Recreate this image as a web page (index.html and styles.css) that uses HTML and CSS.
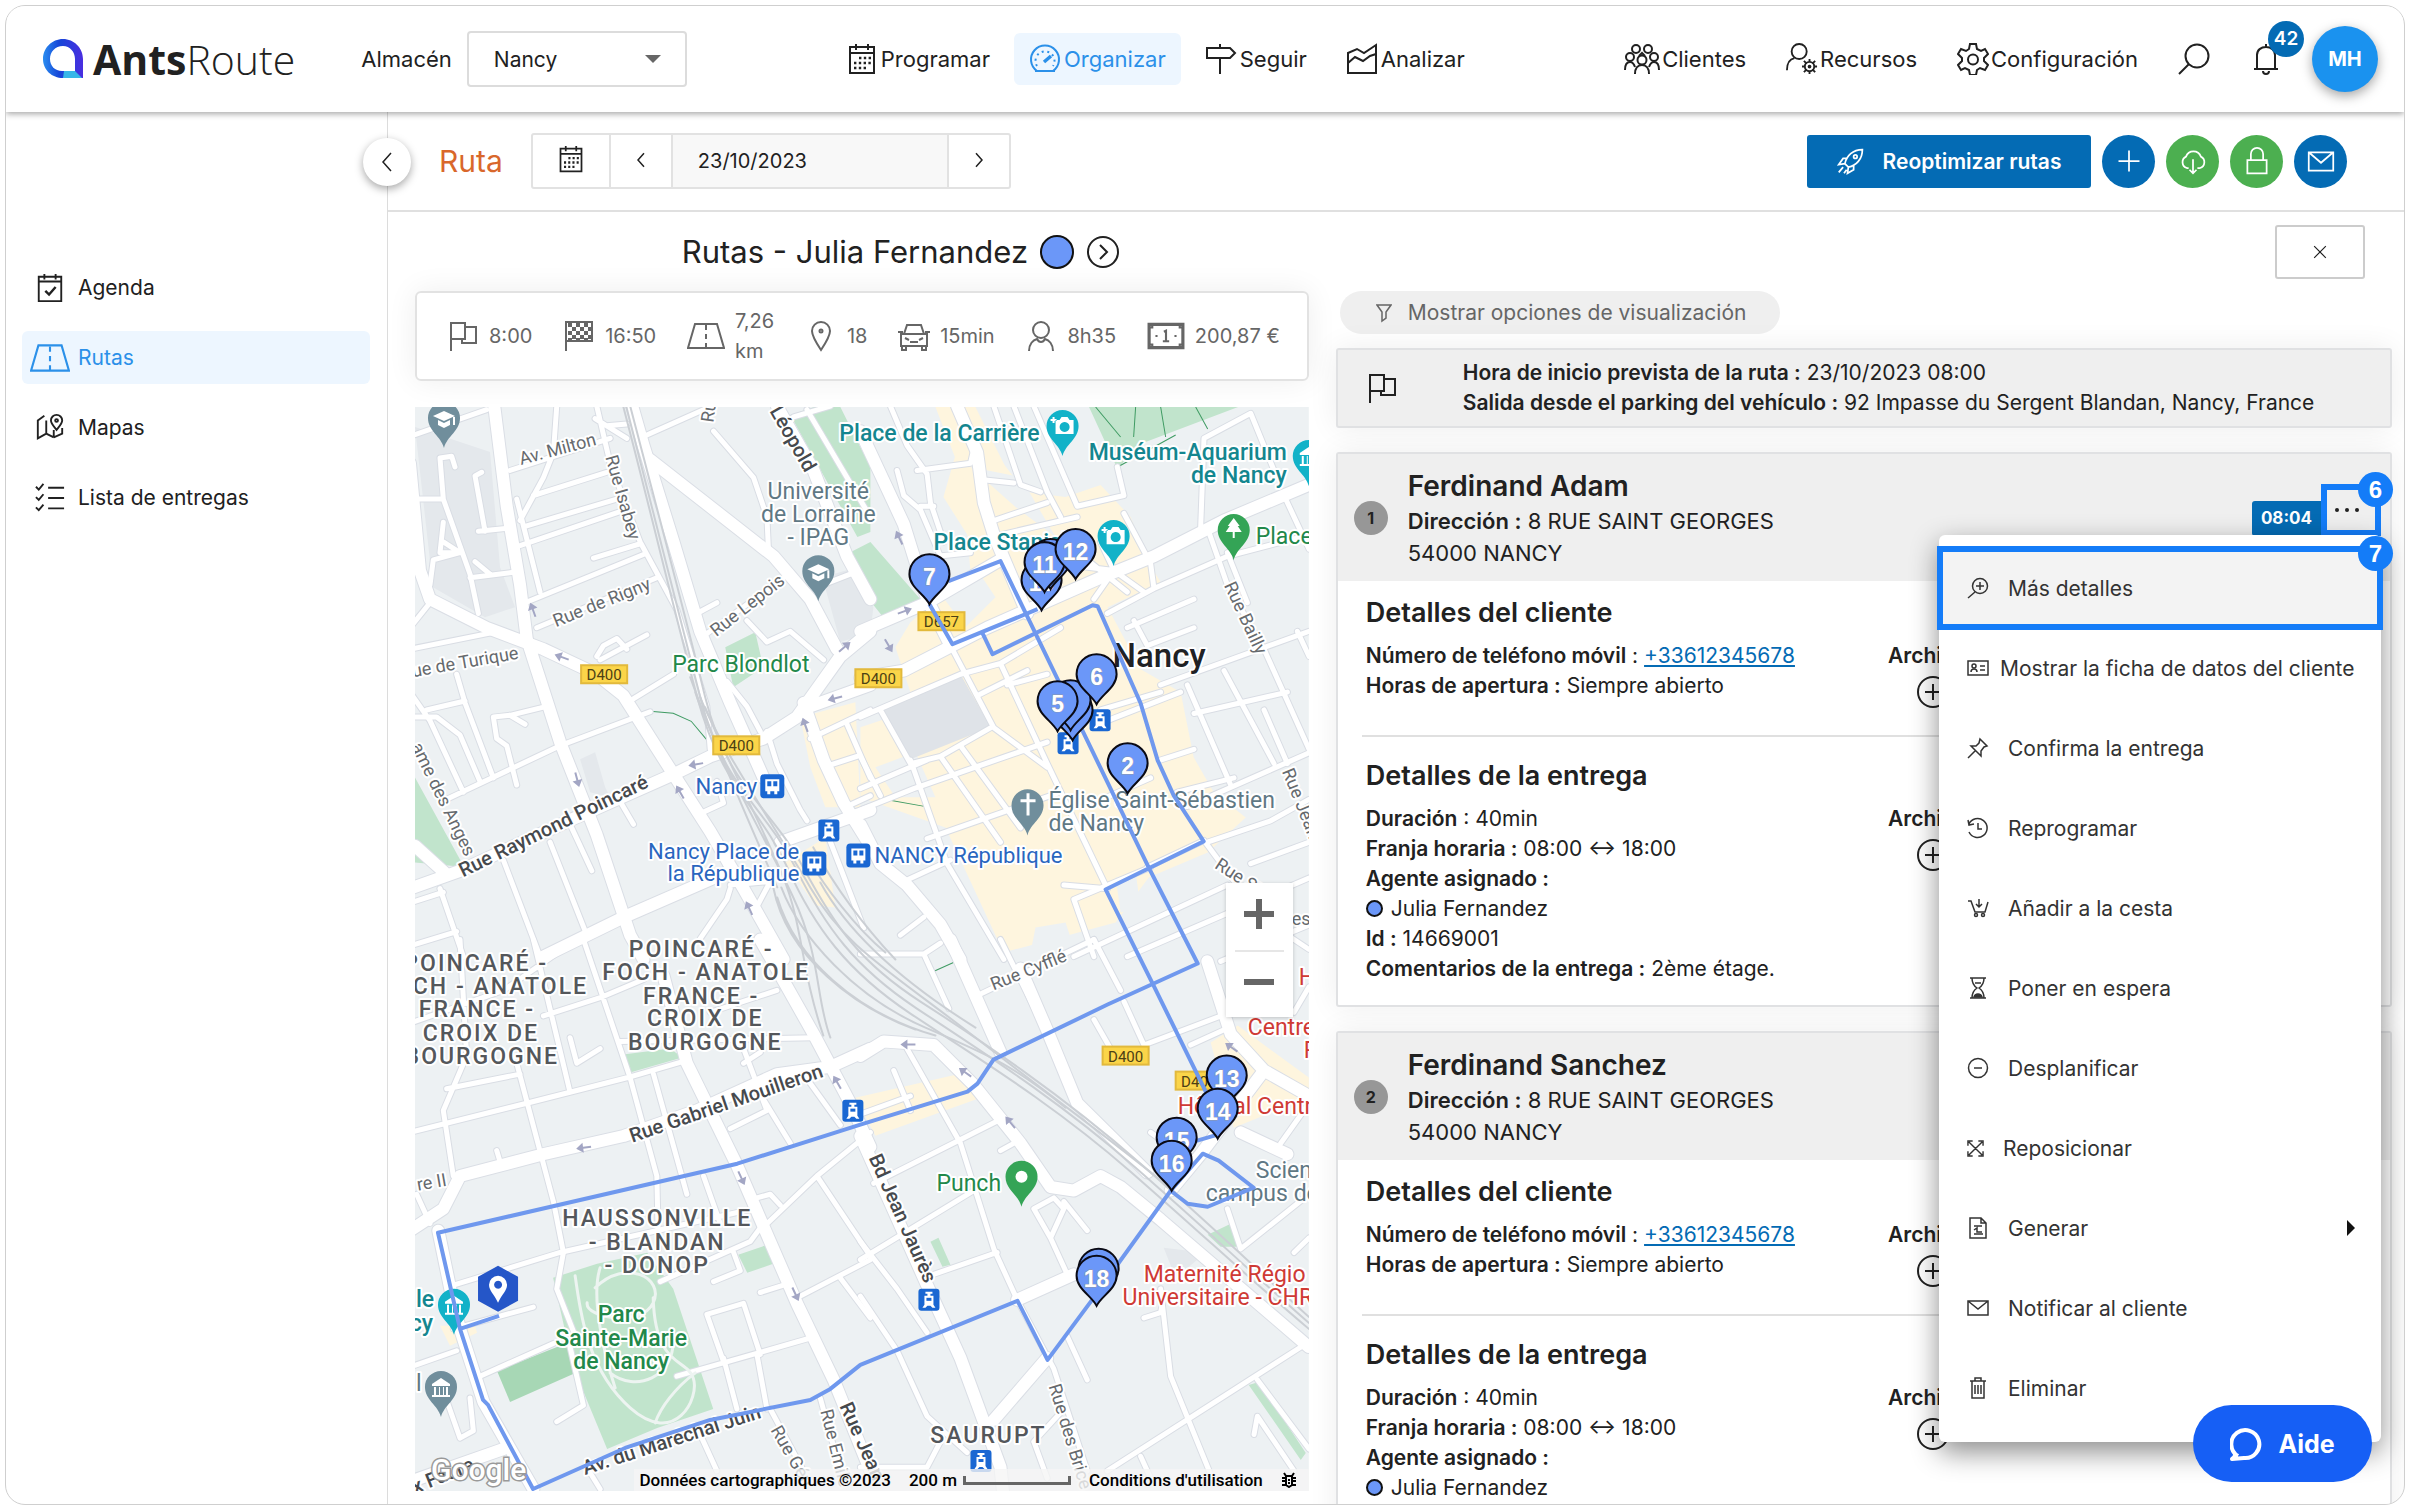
FILE: index.html
```html
<!doctype html>
<html lang="es">

<head>
    <meta charset="utf-8">
    <meta name="viewport" content="width=device-width, initial-scale=1">
    <title>AntsRoute - Rutas</title>
    <link rel="stylesheet" href="styles.css">
</head>

<body>
    <!-- icons -->
    <svg class="sprite" aria-hidden="true">
        <symbol id="i-calendar" viewBox="0 0 32 32">
            <path d="M4 4h24v26H4zM4 10h24M10 1v6M22 1v6" />
            <path stroke-dasharray="2.4 2.4" stroke-width="2.6" d="M13 15h12M8 20h17M8 25h12" />
        </symbol>
        <symbol id="i-agenda" viewBox="0 0 32 32">
            <path d="M4 4h24v26H4zM4 9h24M10 1v6M22 1v6" />
            <path stroke-width="2.6" d="M11 19l4 4 7-8" />
        </symbol>
        <symbol id="i-gauge" viewBox="0 0 32 32">
            <path d="M8 28a14 14 0 1 1 16 0zM6 28h20" />
            <path stroke-dasharray="2 3.6" d="M8 23a9.500 9.500 0 1 1 16 0" />
            <path stroke-width="3.5" d="M15 19l7-6" />
        </symbol>
        <symbol id="i-sign" viewBox="0 0 32 32">
            <path d="M2 5h23l5 5-5 5H2zM15 1v4M15 15v16" />
        </symbol>
        <symbol id="i-chart" viewBox="0 0 32 32">
            <path d="M2 30V10l9-4 7 4L30 2v28zM2 20l7-6 8 4 7-5 6-2" />
        </symbol>
        <symbol id="i-clients" viewBox="0 0 36 32">
            <circle cx="12" cy="6" r="4" />
            <circle cx="24" cy="6" r="4" />
            <circle cx="6" cy="14" r="4" />
            <circle cx="30" cy="14" r="4" />
            <circle cx="18" cy="17" r="4.500" />
            <path d="M1 27c0-5 2-8 5-8s4 2 5 5M35 27c0-5-2-8-5-8s-4 2-5 5M11 31c0-6 3-9 7-9s7 3 7 9M15 13l3-3 3 3" />
        </symbol>
        <symbol id="i-resources" viewBox="0 0 34 34">
            <circle cx="14" cy="9" r="8" />
            <path d="M1 29c0-7 3-12 8-13" />
            <circle cx="25" cy="25" r="5" />
            <circle cx="25" cy="25" r="1" />
            <path d="M25 17v3M25 30v3M17 25h3M30 25h3M19 19l3 3M28 28l3 3M31 19l-3 3M22 28l-3 3" />
        </symbol>
        <symbol id="i-gear" viewBox="0 0 32 32">
            <path d="M13 1h6l1 5 4 2 4-2 3 5-4 4v3l4 4-3 5-5-2-3 2-1 5h-6l-1-5-4-2-4 2-3-5 4-4v-3l-4-4 3-5 5 2 3-2z" />
            <circle cx="16" cy="16.500" r="5" />
        </symbol>
        <symbol id="i-search" viewBox="0 0 32 32">
            <circle cx="19" cy="13" r="11.500" />
            <path d="M11 21L1 31" />
        </symbol>
        <symbol id="i-bell" viewBox="0 0 26 32">
            <path d="M1 26h24M4 26V12c0-5 4-8 9-8s9 3 9 8v14M13 1v3M10 28a3 3 0 0 0 6 0" />
        </symbol>
        <symbol id="i-road" viewBox="0 0 38 28">
            <path d="M8 2h22l7 24H1z" />
            <path stroke-dasharray="5 4" d="M19 3v23" />
        </symbol>
        <symbol id="i-map" viewBox="0 0 32 32">
            <path d="M20 26l-8-4-9 5V8l7-5M12 8v14M20 26l9-4V16M20 18v8" />
            <path d="M23 18c-4-5-6-7-6-10a6 6 0 0 1 12 0c0 3-2 5-6 10z" />
            <circle cx="23" cy="8" r="1.500" />
        </symbol>
        <symbol id="i-list" viewBox="0 0 32 32">
            <path d="M14 5h17M14 16h17M14 27h17" />
            <path d="M1 4l3 3 5-6M1 15l3 3 5-6M1 26l3 3 5-6" />
        </symbol>
        <symbol id="i-left" viewBox="0 0 16 24">
            <path d="M12 3L4 12l8 9" />
        </symbol>
        <symbol id="i-right" viewBox="0 0 16 24">
            <path d="M4 3l8 9-8 9" />
        </symbol>
        <symbol id="i-rocket" viewBox="0 0 32 32">
            <path d="M9 19C11 10 18 3 29 3c0 11-7 18-16 20zM11 13H7l-5 7 7-1M19 21v5l-7 4 1-7M7 23l-5 6M11 26l-3 4" />
            <circle cx="21" cy="11" r="2" />
        </symbol>
        <symbol id="i-plus" viewBox="0 0 32 32">
            <path d="M16 4v24M4 16h24" />
        </symbol>
        <symbol id="i-cloud" viewBox="0 0 32 32">
            <path d="M11 24H9a7 7 0 0 1-1-13 9 9 0 0 1 17 0 7 7 0 0 1-1 13h-3M16 14v16M12 26l4 4 4-4" />
        </symbol>
        <symbol id="i-lock" viewBox="0 0 32 32">
            <path d="M5 15h22v15H5zM9 15V8a7 7 0 0 1 14 0v7" />
        </symbol>
        <symbol id="i-mail" viewBox="0 0 32 32">
            <path d="M2 6h28v21H2zM2 6l14 12L30 6" />
        </symbol>
        <symbol id="i-mail-sm" viewBox="0 0 22 22">
            <path d="M1 4h20v14H1zM1 4l10 8 10-8" />
        </symbol>
        <symbol id="i-flag" viewBox="0 0 32 32">
            <path d="M4 31V3h14v16H4M18 7h11v16H15v-4" />
        </symbol>
        <symbol id="i-finish" viewBox="0 0 32 32">
            <path d="M3 31V2h26v19H3" />
            <path stroke-width="4" stroke-dasharray="4 4" d="M5 5h24M5 13h24M5 20h24" />
            <path stroke-width="4" stroke-dasharray="4 4" d="M9 9h20M9 17h20" />
        </symbol>
        <symbol id="i-pin" viewBox="0 0 24 32">
            <path d="M12 30C6 21 3 16 3 11a9 9 0 0 1 18 0c0 5-3 10-9 19z" />
            <circle cx="12" cy="11" r="1.500" />
        </symbol>
        <symbol id="i-car" viewBox="0 0 32 32">
            <path d="M3 14h26v12H3zM6 14l3-9h14l3 9M0 12h5M27 12h5M4 26v4h4v-4M24 26v4h4v-4M12 22h8M7 18l4 2M25 18l-4 2" />
        </symbol>
        <symbol id="i-person" viewBox="0 0 28 32">
            <circle cx="14" cy="10" r="8" />
            <path d="M2 31c0-7 4-11 8-12 2 4 6 4 8 0 4 1 8 5 8 12" />
        </symbol>
        <symbol id="i-money" viewBox="0 0 36 26">
            <path stroke-width="3" d="M2 2h32v22H2z" />
            <path d="M16 9l2-1v10M15 18h6M9 12v2M27 12v2M5 2v3H2M31 2v3h3M5 24v-3H2M31 24v-3h3" />
        </symbol>
        <symbol id="i-filter" viewBox="0 0 16 20">
            <path d="M1 2h14l-5 7v6l-4 3V9z" />
        </symbol>
        <symbol id="i-next" viewBox="0 0 34 34">
            <circle cx="17" cy="17" r="15" />
            <path d="M14 10l7 7-7 7" />
        </symbol>
        <symbol id="i-add" viewBox="0 0 34 34">
            <circle cx="17" cy="17" r="15" />
            <path d="M17 9v16M9 17h16" />
        </symbol>
        <symbol id="i-zoom" viewBox="0 0 22 22">
            <circle cx="13" cy="9" r="7.500" />
            <path d="M8 15l-7 6M13 5v8M9 9h8" />
        </symbol>
        <symbol id="i-card" viewBox="0 0 22 22">
            <path d="M1 4h20v14H1zM13 9h5M13 13h5M4 15c0-4 6-4 6 0" />
            <circle cx="7" cy="9" r="2" />
        </symbol>
        <symbol id="i-tack" viewBox="0 0 22 22">
            <path d="M1 21l7-7M13 2l7 7-3 1-3 4v5L4 9h5l3-3z" />
        </symbol>
        <symbol id="i-history" viewBox="0 0 22 22">
            <path d="M2 7a9.500 9.500 0 1 1 0 8M1 3l1 5 5-1M11 6v6h4" />
        </symbol>
        <symbol id="i-cart" viewBox="0 0 22 22">
            <path d="M1 4h3l4 11h10l3-10M12 2v8M9 7l3 3 3-3" />
            <circle cx="9" cy="18" r="1.500" />
            <circle cx="16" cy="18" r="1.500" />
        </symbol>
        <symbol id="i-hourglass" viewBox="0 0 22 22">
            <path d="M3 1h16M3 21h16M5 1c0 6 2 8 5 10-3 2-5 4-5 10M17 1c0 6-2 8-5 10 3 2 5 4 5 10M8 6h6" />
            <path fill="currentColor" d="M7 20c1-4 7-4 8 0z" />
        </symbol>
        <symbol id="i-minus" viewBox="0 0 22 22">
            <circle cx="11" cy="11" r="9.500" />
            <path d="M7 11h8" />
        </symbol>
        <symbol id="i-expand" viewBox="0 0 18 18">
            <path d="M2 2l14 14M16 2L2 16M1 6V1h5M12 1h5v5M17 12v5h-5M6 17H1v-5" />
        </symbol>
        <symbol id="i-doc" viewBox="0 0 22 22">
            <path d="M3 1h11l5 5v15H3zM14 1v5h5M7 9h8M7 13l3-2v4l5 0M7 17h9" />
        </symbol>
        <symbol id="i-trash" viewBox="0 0 22 22">
            <path d="M3 4h16M8 4V1h6v3M5 4v17h12V4M8 8v9M11 8v9M14 8v9" />
        </symbol>
    </svg>

    <div class="app">
        <header class="topbar">
            <a class="logo" href="#">
                <svg width="40" height="40" viewBox="0 0 40 40" aria-hidden="true">
                    <defs>
                        <linearGradient id="lg" x1="0" y1="0" x2="1" y2="0">
                            <stop offset="0" stop-color="#2a8df0" />
                            <stop offset=".4" stop-color="#1546d8" />
                            <stop offset="1" stop-color="#4a2ee0" />
                        </linearGradient>
                    </defs>
                    <path fill="url(#lg)" fill-rule="evenodd" d="M20 0c11 0 20 9 20 20v19H20C9 39 0 31 0 20S9 0 20 0zM20 7C12 7 7 13 7 20s5 12 12 12h13V20c0-7-5-13-12-13z" />
                    <path fill="#38b6e8" d="M21 32h11l7 7H20z" />
                </svg>
                <span><b>Ants</b>Route</span>
            </a>
            <label class="warehouse-label" for="warehouse">Almacén</label>
            <span class="select-wrap">
                <select id="warehouse">
                    <option>Nancy</option>
                </select>
            </span>
            <nav class="main-nav">
                <a href="#"><svg class="icon"><use href="#i-calendar" /></svg>Programar</a>
                <a href="#" class="active"><svg class="icon"><use href="#i-gauge" /></svg>Organizar</a>
                <a href="#"><svg class="icon"><use href="#i-sign" /></svg>Seguir</a>
                <a href="#"><svg class="icon"><use href="#i-chart" /></svg>Analizar</a>
            </nav>
            <nav class="user-nav">
                <a href="#"><svg class="icon wide"><use href="#i-clients" /></svg>Clientes</a>
                <a href="#"><svg class="icon"><use href="#i-resources" /></svg>Recursos</a>
                <a href="#"><svg class="icon"><use href="#i-gear" /></svg>Configuración</a>
                <button class="plain" aria-label="Buscar"><svg class="icon"><use href="#i-search" /></svg></button>
                <button class="plain bell" aria-label="Notificaciones"><svg class="icon"><use href="#i-bell" /></svg><span class="count">42</span></button>
                <button class="avatar">MH</button>
            </nav>
        </header>

        <div class="body">
            <aside class="sidebar">
                <button class="collapse" aria-label="Contraer"><svg class="chev"><use href="#i-left" /></svg></button>
                <nav class="side-nav">
                    <a href="#"><svg class="icon"><use href="#i-agenda" /></svg>Agenda</a>
                    <a href="#" class="active"><svg class="icon"><use href="#i-road" /></svg>Rutas</a>
                    <a href="#"><svg class="icon"><use href="#i-map" /></svg>Mapas</a>
                    <a href="#"><svg class="icon"><use href="#i-list" /></svg>Lista de entregas</a>
                </nav>
            </aside>

            <main class="main">
                <div class="toolbar">
                    <h1>Ruta</h1>
                    <div class="date-group">
                        <button class="cal" aria-label="Calendario"><svg class="icon-sm"><use href="#i-calendar" /></svg></button>
                        <button aria-label="Anterior"><svg class="chev-sm"><use href="#i-left" /></svg></button>
                        <input type="text" value="23/10/2023" aria-label="Fecha">
                        <button aria-label="Siguiente"><svg class="chev-sm"><use href="#i-right" /></svg></button>
                    </div>
                    <div class="actions">
                        <button class="optimize"><svg class="icon-sm"><use href="#i-rocket" /></svg>Reoptimizar rutas</button>
                        <button class="round" aria-label="Añadir"><svg class="icon-sm"><use href="#i-plus" /></svg></button>
                        <button class="round green" aria-label="Exportar"><svg class="icon-sm"><use href="#i-cloud" /></svg></button>
                        <button class="round green" aria-label="Bloquear"><svg class="icon-sm"><use href="#i-lock" /></svg></button>
                        <button class="round" aria-label="Enviar"><svg class="icon-sm"><use href="#i-mail" /></svg></button>
                    </div>
                </div>

                <div class="content">
                    <section class="route">
                        <div class="route-title">
                            <h2>Rutas - Julia Fernandez</h2>
                            <span class="dot big"></span>
                            <button class="plain" aria-label="Ruta siguiente"><svg class="icon-circle"><use href="#i-next" /></svg></button>
                        </div>

                        <ul class="stats">
                            <li><svg class="icon-st"><use href="#i-flag" /></svg>8:00</li>
                            <li><svg class="icon-st"><use href="#i-finish" /></svg>16:50</li>
                            <li><svg class="icon-st wide"><use href="#i-road" /></svg><span>7,26<br>km</span></li>
                            <li><svg class="icon-st"><use href="#i-pin" /></svg>18</li>
                            <li><svg class="icon-st"><use href="#i-car" /></svg>15min</li>
                            <li><svg class="icon-st"><use href="#i-person" /></svg>8h35</li>
                            <li><svg class="icon-st wide"><use href="#i-money" /></svg>200,87 €</li>
                        </ul>

                        <div class="map">
                            <svg class="map-svg" viewBox="0 0 893 1083" preserveAspectRatio="xMidYMid slice">
                                <defs>
                                    <!-- the map is cut in 4 tiles, each with its own scale -->
                                    <g id="minor">
                                        <g transform="translate(-5 -8) scale(.3333 .3571)">
                                            <path d="M560 20L600 180 690 400 800 590 890 860 900 980M440 20L430 150 400 220 330 340M700 105L880 30M555 55L650 110M590 75L650 70M300 200L600 110M370 270L590 205M350 355L620 280M330 410L630 315M320 280L390 540M345 570L700 435M550 445L690 405M380 640L740 500" />
                                            <path d="M910 90L1030 220 1070 330 1075 430M215 205L195 215 225 370M205 370L310 360M0 700L240 655M0 640L60 570M15 100L230 30M110 1120L450 970 720 875M650 850L790 770M0 820L60 900 160 1100M0 890L80 890 150 940 210 1070M50 870L165 845M140 770L165 850 250 1060" />
                                            <path d="M410 860L300 885 250 890 260 950 290 970 320 1080M300 885L345 910M90 1370L160 1560M280 1290L390 1560M420 1240L530 1500M480 1190L545 1320M620 1110L670 1190M0 1410L100 1380M0 1530L140 1490M870 670L1120 500M860 600L920 570M1010 620L1070 680 1140 650 1240 730" />
                                            <path d="M950 790L1010 860 1050 930M1070 930L1100 1020 1170 1150 1190 1180M870 1160L940 1130 920 1070M960 1370L950 1400 870 1510M960 1360L1080 1350 1040 1420M1200 950L1380 870M1310 910L1380 1060M1240 1030L1340 1000M1310 1140L1380 1110M1240 1190L1360 1480M1210 530L1320 490" />
                                            <path d="M15 280L100 280M90 165L125 160 135 190M90 165L100 280 180 490 205 600M100 345L90 430 150 430M100 400L150 430M180 500L310 485M60 520L70 450 150 430M195 455L240 490M1150 50L1260 20M1190 30L1380 330M560 720L580 690 620 670 650 700M570 730L710 660" />
                                        </g>
                                        <g transform="translate(445 -8) scale(.3333 .3571)">
                                            <path d="M90 20L140 130 200 210 210 290 250 400M170 200L330 180 340 140M110 200L130 270 180 310 240 440M400 20L480 240 540 260M520 20L650 300 790 270 770 190M180 300L220 300M360 225L460 235M460 20L560 260 600 330M230 440L330 430M400 340L560 290M420 380L650 330" />
                                            <path d="M1040 360L1100 520 1210 700 1345 980M1270 270L1345 420M1020 360L1030 110 1170 40 1240 200M740 600L880 530 1100 440 1345 380M880 530L870 460 790 320M800 640L1000 560M820 620L860 690 1000 640M900 800L1345 650M980 800L1110 1080M1090 760L1240 1020M1210 870L1280 1020M1000 880L1280 820" />
                                            <path d="M720 870L900 820M740 900L960 820M980 1140L1345 990M1040 1240L1230 1180M860 1310L1030 1235 1200 1450 1345 1540M640 1400L870 1310M610 1360L740 1370M640 1400L700 1560M640 1560L1100 1360M800 1560L1345 1340M900 1010L1000 980M700 1130L870 1060M950 1100L1120 1060M1230 1180L1345 1120M1170 1300L1345 1240" />
                                            <path d="M0 890L300 770 420 740 600 640M60 870L150 1020 240 1000 390 920M270 690L400 920 560 1030M420 740L560 1020 740 1370M0 1090L200 1010M0 1150L160 1090 560 960M240 1000L420 1240M300 970L480 1200M200 1230L600 1100M150 1010L260 1300 430 1568M130 1350L270 1290M120 1500L190 1450M0 1000L60 1110M350 830L500 760M440 800L560 770" />
                                            <path d="M590 460L760 480 700 560M760 480L870 440M760 480L850 540M760 480L720 400M680 450L800 540M1100 430L1160 570M1310 650L1345 720" />
                                        </g>
                                        <g transform="translate(-5 532) scale(.3333 .3636)">
                                            <path d="M130 650L100 470 170 320 150 0M0 530L350 450 650 380 820 335M110 410L330 370M320 340L430 720 460 860 440 960 500 1100M0 230L280 140 500 0M400 210L570 160 700 110M520 0L660 380 740 650 745 850M370 0L480 420M730 370L830 700M630 280L1210 270M960 520L1070 470 1000 300M1060 440L1140 560M1180 370L1290 510" />
                                            <path d="M880 650L930 780M1380 530L1220 650 1060 790M1220 650L1380 870M750 940L1020 830 1060 780M130 950L450 860 1030 740M1170 980L1380 880M1290 930L1380 1040M800 1200L1200 1095M940 1150L980 1290M1040 1140L1070 1290M890 1030L1000 1000 1050 1140M890 1030L940 1160M130 1070L370 1010M210 1200L430 1110" />
                                            <path d="M100 1240L150 1370M15 1170L140 1130M440 1325L520 1280 480 1120M1080 1290L1180 1460M1230 1260L1290 1460M530 1450L570 1510M910 940L990 910 970 860M1050 970L1120 950M480 270L500 340 570 300M900 200L1100 140M20 700L60 780M860 1340L920 1460M1000 340L1050 310M180 1260L190 1350 150 1370M260 580L270 610M1040 710L1080 700 1110 730" />
                                        </g>
                                        <g transform="translate(445 532) scale(.3333 .3636)">
                                            <path d="M0 480L150 430M100 360L150 470M140 300L300 560 400 850 470 990 580 1180 680 1460M40 670L430 490M0 880L340 690M0 830L110 960 200 1080M220 920L410 860M470 990L640 920M570 820L620 920M620 1090L680 1210M610 720L680 800M520 740L580 710 610 740 570 820 520 740" />
                                            <path d="M0 980L110 1130 200 1310 320 1410M0 1450L200 1450 240 1380M740 1460L1320 1120M900 960L930 1200 1050 1470M850 1040L900 1025 910 980M1190 1210L1345 1400M1180 1360L1190 1310 1300 1460M1100 740L1140 850 1345 700M700 220L750 300M790 170L850 290M700 0L780 140M850 290L1110 200" />
                                            <path d="M990 290L1110 240M1080 60L1345 -40M360 150L700 0M420 580L480 550M190 40L265 190M0 40L190 40 240 10M870 530L900 550M420 0L560 260M840 1420L870 1480M520 1380L600 1300M520 1380L560 1480M1300 200L1345 130M1260 560L1345 450M1300 860L1345 820" />
                                        </g>
                                    </g>
                                    <g id="major">
                                        <g transform="translate(-5 -8) scale(.3333 .3571)">
                                            <path d="M250 0L290 300 330 520 350 670 450 960 560 1220 660 1500 700 1568M0 180L30 480 60 560 230 640 400 700 560 770 640 830 790 1050 900 1210 1000 1370 1120 1568M660 0L700 130 790 400 870 650 960 850 1060 1060" />
                                            <path d="M0 1370L150 1320 500 1170 790 1050 900 1000 1060 950 1160 890 1290 720 1380 650M720 170L1090 440 1200 560 1280 700M1100 20L1210 200 1310 440 1380 560M1180 850L1240 1010 1300 1130 1380 1250M1200 860L1380 800M1110 1240L1380 1150M400 1560L640 1450 960 1320M15 1250L110 1330" />
                                        </g>
                                        <g transform="translate(445 -8) scale(.3333 .3571)">
                                            <path d="M290 20L350 150 370 290 400 380 500 600M0 90L130 350 200 560 270 690M0 650L200 570 420 450M0 780L130 760 380 640 720 500 880 440 1090 340 1345 240M0 1190L60 1300 140 1360 240 1470 300 1568" />
                                        </g>
                                        <g transform="translate(-5 532) scale(.3333 .3636)">
                                            <path d="M760 100L830 340 980 620 1160 1000 1270 1210 1380 1460M0 800L100 740 150 650 400 590 640 540 860 470 1100 370 1260 350 1380 300M1050 0L1210 260 1320 450 1380 570M0 1490L280 1400M85 800L130 1000 150 1070 220 1270 370 1510" />
                                        </g>
                                        <g transform="translate(445 532) scale(.3333 .3636)">
                                            <path d="M270 0L420 310M480 80L560 250 650 450 860 640M0 320L70 280 220 290 340 400 480 560 570 680 640 690 720 650 780 680 900 770 1345 1120M400 1320L560 1150M0 540L200 950 300 1150 420 1450 430 1540M1040 60L1110 260 1210 360 1345 430M1210 360L1020 590 930 690M1140 530L1280 590M470 990L640 920" />
                                        </g>
                                    </g>
                                    <path id="pin" class="pin" d="M0 0C-5 -10 -20 -17 -20 -30A20 20 0 0 1 20 -30C20 -17 5 -10 0 0Z" />
                                    <path id="poi" d="M0 0C-3 -12 -16 -17 -16 -30A16 16 0 0 1 16 -30C16 -17 3 -12 0 0Z" />
                                    <g id="bus">
                                        <rect x="-12" y="-12" width="24" height="24" rx="4" fill="#1a67d2" />
                                        <path fill="#fff" d="M-7 -7h14v12h-2v3h-3v-3h-4v3h-3v-3h-2z" />
                                        <path fill="#1a67d2" d="M-5 -5h4v5h-4zM1 -5h4v5h-4z" />
                                    </g>
                                    <g id="tram">
                                        <rect x="-10" y="-11" width="21" height="22" rx="3" fill="#1a67d2" />
                                        <path fill="#fff" d="M-3 -8h7v2h-2v2h3v9l2 3h-3l-2-2h-3l-2 2h-3l2-3v-9h3v-2h-2z" />
                                        <path fill="#1a67d2" d="M-2 -2h5v3h-5z" />
                                    </g>
                                    <g id="tag">
                                        <rect x="-23" y="-9" width="46" height="18" fill="#fbd549" stroke="#e2b93c" stroke-width="2" />
                                    </g>
                                    <path id="cap" fill="#fff" d="M-11 -32l11 -5 11 5 -11 5zM-6 -28v5l6 3 6 -3v-5l-6 3zM9 -31h2v8h-2z" />
                                    <path id="cam" fill="#fff" fill-rule="evenodd" d="M-7 -36h4l2 -3h6l2 3h4v14h-18zM2 -34a5 5 0 1 0 .1 0zM-10 -39h2v2h2v2h-2v2h-2v-2h-2v-2h2z" />
                                    <path id="temple" fill="#fff" d="M-9 -33l9 -6 9 6v2H-9zM-7 -30h2v8h-2zM-2 -30h1v8h-1zM2 -30h1v8h-1zM5 -30h2v8h-2zM-9 -22H9v2H-9z" />
                                    <path id="arrow" fill="#a3a6c4" d="M-7 -1h8v-4l7 5 -7 5v-4h-8z" />
                                </defs>

                                <rect width="893" height="1083" fill="#edf1f3" />

                                <!-- blocks -->
                                <g fill="#e4e8ec">
                                    <path d="M0 20L75 45 85 160 100 200 70 210 18 180ZM407 170L435 162 458 200 455 225 425 235ZM165 352L180 345 190 380 195 390 175 385ZM748 840L790 845 760 870Z" />
                                </g>
                                <g fill="#fef5de">
                                    <path d="M548 20L575 40 610 85 650 90 685 78 715 110 733 155 745 175 692 200 725 262 765 285 778 350 798 385 830 410 792 445 733 470 700 515 588 545 530 420 445 390 445 320 475 310 500 300 480 240 495 215 555 165 552 128 528 90Z" />
                                    <path d="M385 310L440 295 445 400 410 400 395 360ZM370 455L410 430 420 500 400 498ZM440 690L550 665 565 690 460 728ZM795 635L822 618 893 670 893 690 818 720ZM25 918L60 918 62 925 35 938ZM520 0L560 0 590 60 555 90Z" />
                                </g>
                                <path fill="#edf1f3" d="M555 60L605 70 640 130 600 100ZM520 180L560 160 580 190 550 220ZM460 360L500 345 520 390 480 390ZM700 470L720 465 725 500 705 505ZM620 520L650 515 660 545 615 545Z" />
                                <path fill="#dfe3e8" d="M465 303L545 267 575 320 495 352Z" />
                                <g fill="#c1e4cc">
                                    <path d="M375 8L402 -1 425 0 455 60 455 125 442 130ZM435 145L455 135 505 192 467 209 440 175ZM673 -1L825 -1 722 38 702 62ZM0 370L45 452 55 460 0 455Z" />
                                    <path d="M138 870L182 856 232 845 258 881 298 1001 242 1020 192 1041 168 983 152 932ZM208 647L255 641 267 650 215 665ZM323 847L352 837 358 856 332 865ZM515 834L523 830 535 857 527 859ZM792 827L815 816 822 839 805 839ZM833 977L843 974 890 1045 885 1052Z" />
                                    <path d="M105 200L112 200 117 225 108 225ZM310 240L340 225 348 260 318 280Z" />
                                </g>
                                <path fill="#a7d7b5" d="M82 963L155 934 158 966 95 994Z" />
                                <g fill="none" stroke="#3f9b63" stroke-width="1">
                                    <path d="M235 304L258 306 276 314 292 333M469 392L509 399M518 564L538 555M680 0L705 30M720 0L718 30M745 0L750 30M780 0L792 22M702 60L760 28" />
                                </g>

                                <!-- streets -->
                                <use href="#minor" class="case-minor" />
                                <use href="#major" class="case-major" />
                                <use href="#minor" class="fill-minor" />
                                <use href="#major" class="fill-major" />
                                <g class="park-path">
                                    <path d="M160 868C165 900 170 960 215 1000S285 990 278 970 240 960 238 890M185 860C175 890 190 950 200 980M180 880C210 850 250 870 238 895S170 910 172 895M195 965C220 985 260 970 258 930M280 965C260 980 245 1000 240 1015" />
                                </g>

                                <!-- railway -->
                                <g class="rail">
                                    <path d="M211 -1C240 110 262 200 285 290S350 400 380 460 440 560 500 600 640 690 720 760 830 860 893 915" />
                                    <path d="M215 -1C244 110 268 200 290 290S356 400 388 460 446 556 505 594 645 686 725 756 835 856 893 909" />
                                    <path d="M208 -1C237 110 258 200 282 290S345 400 372 460 432 564 495 606 635 694 715 764 828 866 893 921" />
                                    <path d="M285 290C305 340 360 420 395 480S470 560 560 630 700 735 760 785" />
                                    <path d="M280 285C300 345 350 430 378 490S400 590 415 630M290 300C310 350 348 420 368 470S385 560 408 628M275 270C300 340 345 440 362 480" />
                                    <path d="M366 480C385 530 440 590 510 620S600 660 650 700M362 490C380 550 440 605 520 628M358 480C372 550 440 600 500 622M392 450C410 480 440 520 470 545M398 440C420 480 450 520 480 552M405 475C430 520 480 570 560 620" />
                                </g>

                                <use href="#arrow" transform="translate(118 203) rotate(-110)" />
                                <use href="#arrow" transform="translate(147 250) rotate(200)" />
                                <use href="#arrow" transform="translate(162 372) rotate(75)" />
                                <use href="#arrow" transform="translate(281 357) rotate(170)" />
                                <use href="#arrow" transform="translate(265 385) rotate(-120)" />
                                <use href="#arrow" transform="translate(429 240) rotate(-40)" />
                                <use href="#arrow" transform="translate(420 291) rotate(165)" />
                                <use href="#arrow" transform="translate(390 318) rotate(-110)" />
                                <use href="#arrow" transform="translate(334 501) rotate(-115)" />
                                <use href="#arrow" transform="translate(484 131) rotate(-115)" />
                                <use href="#arrow" transform="translate(489 204) rotate(-20)" />
                                <use href="#arrow" transform="translate(473 238) rotate(60)" />
                                <use href="#arrow" transform="translate(169 740) rotate(172)" />
                                <use href="#arrow" transform="translate(326 770) rotate(65)" />
                                <use href="#arrow" transform="translate(380 886) rotate(65)" />
                                <use href="#arrow" transform="translate(422 675) rotate(-120)" />
                                <use href="#arrow" transform="translate(493 637) rotate(180)" />
                                <use href="#arrow" transform="translate(550 665) rotate(-145)" />
                                <use href="#arrow" transform="translate(595 715) rotate(-130)" />
                                <use href="#arrow" transform="translate(816 640) rotate(-145)" />

                                <!-- labels -->
                                <g class="lbl street">
                                    <text transform="translate(106 58) rotate(-15)">Av. Milton</text>
                                    <text transform="translate(190 50) rotate(74)">Rue Isabey</text>
                                    <text transform="translate(141 220) rotate(-22)">Rue de Rigny</text>
                                    <text transform="translate(301 230) rotate(-38)">Rue Lepois</text>
                                    <text transform="translate(-2 270) rotate(-10)">ue de Turique</text>
                                    <text transform="translate(-4 339) rotate(64)">ame des Anges</text>
                                    <text transform="translate(298 16) rotate(-82)">Ru</text>
                                    <text transform="translate(808 178) rotate(65)">Rue Bailly</text>
                                    <text transform="translate(866 364) rotate(68)">Rue Jean</text>
                                    <text transform="translate(798 460) rotate(33)">Rue Sta</text>
                                    <text x="876" y="518">es</text>
                                    <text transform="translate(3 783) rotate(-10)">re II</text>
                                    <text transform="translate(578 583) rotate(-22)">Rue Cyfflé</text>
                                    <text transform="translate(633 978) rotate(73)">Rue des Brice</text>
                                    <text transform="translate(355 1022) rotate(60)">Rue Gén</text>
                                    <text transform="translate(405 1003) rotate(76)">Rue Emile</text>
                                </g>
                                <g class="lbl avenue">
                                    <text transform="translate(48 470) rotate(-26)">Rue Raymond Poincaré</text>
                                    <text transform="translate(354 4) rotate(60)">Léopold</text>
                                    <text transform="translate(217 735) rotate(-19)">Rue Gabriel Mouilleron</text>
                                    <text transform="translate(453 750) rotate(66)">Bd Jean Jaurès</text>
                                    <text transform="translate(170 1067) rotate(-18)">Av. du Maréchal Juin</text>
                                    <text transform="translate(0 1086) rotate(-22)">x Faure</text>
                                    <text transform="translate(424 998) rotate(66)">Rue Jean</text>
                                </g>
                                <g class="lbl poi teal">
                                    <text x="424" y="34">Place de la Carrière</text>
                                    <text x="871" y="53" text-anchor="end">Muséum-Aquarium</text>
                                    <text x="871" y="76" text-anchor="end">de Nancy</text>
                                    <text x="518" y="143">Place Stanislas</text>
                                    <text x="1" y="899">le</text>
                                    <text x="18" y="923" text-anchor="end">cy</text>
                                </g>
                                <g class="lbl poi slate">
                                    <text x="403" y="92" text-anchor="middle">Université</text>
                                    <text x="403" y="115" text-anchor="middle">de Lorraine</text>
                                    <text x="403" y="138" text-anchor="middle">- IPAG</text>
                                    <text x="633" y="401">Église Saint-Sébastien</text>
                                    <text x="633" y="424">de Nancy</text>
                                    <text x="840" y="770">Scien</text>
                                    <text x="790" y="793">campus de</text>
                                    <text x="1" y="983">l</text>
                                </g>
                                <g class="lbl poi green">
                                    <text x="257" y="265">Parc Blondlot</text>
                                    <text x="840" y="137">Place</text>
                                    <text x="521" y="783">Punch</text>
                                    <g class="medium">
                                        <text x="206" y="914" text-anchor="middle">Parc</text>
                                        <text x="206" y="938" text-anchor="middle">Sainte-Marie</text>
                                        <text x="206" y="961" text-anchor="middle">de Nancy</text>
                                    </g>
                                </g>
                                <g class="lbl poi blue">
                                    <text x="342" y="387" text-anchor="end">Nancy</text>
                                    <text x="384" y="452" text-anchor="end">Nancy Place de</text>
                                    <text x="384" y="474" text-anchor="end">la République</text>
                                    <text x="459" y="456">NANCY République</text>
                                </g>
                                <g class="lbl poi red">
                                    <text x="883" y="577">H</text>
                                    <text x="832" y="627">Centre</text>
                                    <text x="888" y="650">R</text>
                                    <text x="762" y="706">Hôpital Central</text>
                                    <text x="728" y="874">Maternité Régio</text>
                                    <text x="707" y="897">Universitaire - CHR</text>
                                </g>
                                <g class="lbl district">
                                    <text x="133" y="563" text-anchor="end">POINCARÉ -</text>
                                    <text x="173" y="586" text-anchor="end">FOCH - ANATOLE</text>
                                    <text x="120" y="609" text-anchor="end">FRANCE -</text>
                                    <text x="124" y="633" text-anchor="end">CROIX DE</text>
                                    <text x="144" y="656" text-anchor="end">BOURGOGNE</text>
                                    <text x="286" y="549" text-anchor="middle">POINCARÉ -</text>
                                    <text x="291" y="572" text-anchor="middle">FOCH - ANATOLE</text>
                                    <text x="286" y="596" text-anchor="middle">FRANCE -</text>
                                    <text x="290" y="618" text-anchor="middle">CROIX DE</text>
                                    <text x="290" y="642" text-anchor="middle">BOURGOGNE</text>
                                    <text x="242" y="818" text-anchor="middle">HAUSSONVILLE</text>
                                    <text x="242" y="842" text-anchor="middle">- BLANDAN</text>
                                    <text x="242" y="865" text-anchor="middle">- DONOP</text>
                                    <text x="573" y="1035" text-anchor="middle">SAURUPT</text>
                                </g>
                                <text class="lbl city" x="697" y="260">Nancy</text>

                                <g class="tags">
                                    <use href="#tag" x="189" y="267" /><text x="189" y="273">D400</text>
                                    <use href="#tag" x="321" y="338" /><text x="321" y="344">D400</text>
                                    <use href="#tag" x="463" y="271" /><text x="463" y="277">D400</text>
                                    <use href="#tag" x="526" y="214" /><text x="526" y="220">D657</text>
                                    <use href="#tag" x="710" y="648" /><text x="710" y="654">D400</text>
                                    <use href="#tag" x="783" y="673" /><text x="783" y="679">D400</text>
                                </g>

                                <use href="#bus" x="357" y="379" />
                                <use href="#bus" x="399" y="456" />
                                <use href="#bus" x="443" y="448" />
                                <use href="#tram" x="413" y="423" />
                                <use href="#tram" x="684" y="313" />
                                <use href="#tram" x="652" y="336" />
                                <use href="#tram" x="437" y="703" />
                                <use href="#tram" x="513" y="892" />
                                <use href="#tram" x="565" y="1053" />

                                <g transform="translate(29 41)"><use href="#poi" fill="#708e9c" /><use href="#cap" /></g>
                                <g transform="translate(403 194)"><use href="#poi" fill="#708e9c" /><use href="#cap" /></g>
                                <g transform="translate(647 49)"><use href="#poi" fill="#12b2c8" /><use href="#cam" /></g>
                                <g transform="translate(698 159)"><use href="#poi" fill="#12b2c8" /><use href="#cam" /></g>
                                <g transform="translate(893 79)"><use href="#poi" fill="#12b2c8" /><use href="#temple" /></g>
                                <g transform="translate(39 927)"><use href="#poi" fill="#12b2c8" /><use href="#temple" /></g>
                                <g transform="translate(26 1009)"><use href="#poi" fill="#708e9c" /><use href="#temple" /></g>
                                <g transform="translate(818 153)"><use href="#poi" fill="#34a456" /><path fill="#fff" d="M0 -42l6 8h-2l4 6h-7v6h-2v-6h-7l4 -6h-2z" /></g>
                                <g transform="translate(612 428)"><use href="#poi" fill="#708e9c" /><path fill="#fff" d="M-1 -42h3v6h6v3h-6v13h-3v-13h-6v-3h6z" /></g>
                                <g transform="translate(606 799)"><use href="#poi" fill="#34a456" /><circle cy="-30" r="6" fill="#fff" /></g>

                                <!-- route -->
                                <path class="route-line" d="M514 197L537 237 622 202M567 226L577 247 677 198 682 199 725 296 742 353 758 388 788 434 690 482 737 576 792 688 802 727 778 734M533 174L585 154 733 460 782 556 692 597 578 652 562 676 552 684 445 717 322 756 23 825 45 921 68 992 73 997 118 1081 210 1040 295 1012 395 992 415 981 445 957 602 893 632 952 678 890 755 783 772 796 792 799 838 780 803 753 787 746 755 783M45 921L84 908" />

                                <path d="M83 858l20 11v24l-20 11 -20 -11v-24z" fill="#2556c8" />
                                <path fill="#fff" fill-rule="evenodd" d="M83 895c-4 -9 -9 -12 -9 -18a9 9 0 0 1 18 0c0 6 -5 9 -9 18zM83 873a4 4 0 1 0 .1 0z" />

                                <g class="stops">
                                    <g transform="translate(514 197)"><use href="#pin" /><text y="-19">7</text></g>
                                    <g transform="translate(626 203)"><use href="#pin" /><text y="-19">10</text></g>
                                    <g transform="translate(635 182)"><use href="#pin" /></g>
                                    <g transform="translate(629 185)"><use href="#pin" /><text y="-19">11</text></g>
                                    <g transform="translate(660 172)"><use href="#pin" /><text y="-19">12</text></g>
                                    <g transform="translate(657 333)"><use href="#pin" /></g>
                                    <g transform="translate(655 323)"><use href="#pin" /></g>
                                    <g transform="translate(681 297)"><use href="#pin" /><text y="-19">6</text></g>
                                    <g transform="translate(642 324)"><use href="#pin" /><text y="-19">5</text></g>
                                    <g transform="translate(712 386)"><use href="#pin" /><text y="-19">2</text></g>
                                    <g transform="translate(811 698)"><use href="#pin" /><text y="-19">13</text></g>
                                    <g transform="translate(802 731)"><use href="#pin" /><text y="-19">14</text></g>
                                    <g transform="translate(761 760)"><use href="#pin" /><text y="-19">15</text></g>
                                    <g transform="translate(756 783)"><use href="#pin" /><text y="-19">16</text></g>
                                    <g transform="translate(683 891)"><use href="#pin" /></g>
                                    <g transform="translate(681 898)"><use href="#pin" /><text y="-19">18</text></g>
                                </g>
                                <text class="google" x="16" y="1072">Google</text>
                            </svg>

                            <div class="zoom-ctl">
                                <button aria-label="Acercar"><svg viewBox="0 0 30 30"><path d="M15 0v30M0 15h30" /></svg></button>
                                <button aria-label="Alejar"><svg viewBox="0 0 30 30"><path d="M0 15h30" /></svg></button>
                            </div>
                            <div class="map-legal">
                                <span>Données cartographiques ©2023</span>
                                <span class="scale">200 m <i></i></span>
                                <a href="#">Conditions d'utilisation</a>
                                <svg width="16" height="16" viewBox="0 0 16 16"><path d="M5 4h6v9l-3 2-3-2zM5 4l-2-3M11 4l2-3M1 6h4M11 6h4M1 9h4M11 9h4M1 13h4M11 13h4M7 8h2M7 11h2" /></svg>
                            </div>
                        </div>
                    </section>

                    <section class="panel">
                        <div class="panel-top">
                            <button class="close" aria-label="Cerrar"><svg viewBox="0 0 12 12"><path d="M1 1l10 10M11 1L1 11" /></svg></button>
                        </div>
                        <button class="filter"><svg><use href="#i-filter" /></svg>Mostrar opciones de visualización</button>

                        <div class="box start">
                            <svg class="icon"><use href="#i-flag" /></svg>
                            <p><b>Hora de inicio prevista de la ruta :</b> 23/10/2023 08:00<br>
                                <b>Salida desde el parking del vehículo :</b> 92 Impasse du Sergent Blandan, Nancy, France</p>
                        </div>

                        <article class="box stop">
                            <header>
                                <span class="num">1</span>
                                <div class="who">
                                    <h3>Ferdinand Adam</h3>
                                    <p><b>Dirección :</b> 8 RUE SAINT GEORGES<br>54000 NANCY</p>
                                </div>
                                <div class="when">
                                    <span class="time">08:04</span>
                                    <button class="more" aria-label="Más acciones"><i></i><i></i><i></i></button>
                                    <span class="step">6</span>
                                    <ul class="menu">
                                        <li class="current"><button><svg><use href="#i-zoom" /></svg>Más detalles</button><span class="step">7</span></li>
                                        <li><button class="tight"><svg><use href="#i-card" /></svg>Mostrar la ficha de datos del cliente</button></li>
                                        <li><button><svg><use href="#i-tack" /></svg>Confirma la entrega</button></li>
                                        <li><button><svg><use href="#i-history" /></svg>Reprogramar</button></li>
                                        <li><button><svg><use href="#i-cart" /></svg>Añadir a la cesta</button></li>
                                        <li><button><svg><use href="#i-hourglass" /></svg>Poner en espera</button></li>
                                        <li><button><svg><use href="#i-minus" /></svg>Desplanificar</button></li>
                                        <li><button><svg class="small"><use href="#i-expand" /></svg>Reposicionar</button></li>
                                        <li><button class="has-sub"><svg><use href="#i-doc" /></svg>Generar</button></li>
                                        <li><button><svg><use href="#i-mail-sm" /></svg>Notificar al cliente</button></li>
                                        <li><button><svg><use href="#i-trash" /></svg>Eliminar</button></li>
                                    </ul>
                                </div>
                            </header>
                            <div class="detail client">
                                <div>
                                    <h4>Detalles del cliente</h4>
                                    <p><b>Número de teléfono móvil</b> : <a href="tel:+33612345678">+33612345678</a><br>
                                        <b>Horas de apertura :</b> Siempre abierto</p>
                                </div>
                                <div class="files"><b>Archivos</b><button class="plain" aria-label="Añadir archivo"><svg class="icon-circle"><use href="#i-add" /></svg></button></div>
                            </div>
                            <div class="detail">
                                <div>
                                    <h4>Detalles de la entrega</h4>
                                    <p><b>Duración</b> : 40min<br>
                                        <b>Franja horaria :</b> 08:00 ↔ 18:00<br>
                                        <b>Agente asignado :</b><br>
                                        <span class="dot"></span>Julia Fernandez<br>
                                        <b>Id :</b> 14669001<br>
                                        <b>Comentarios de la entrega :</b> 2ème étage.</p>
                                </div>
                                <div class="files"><b>Archivos</b><button class="plain" aria-label="Añadir archivo"><svg class="icon-circle"><use href="#i-add" /></svg></button></div>
                            </div>
                        </article>

                        <article class="box stop">
                            <header>
                                <span class="num">2</span>
                                <div class="who">
                                    <h3>Ferdinand Sanchez</h3>
                                    <p><b>Dirección :</b> 8 RUE SAINT GEORGES<br>54000 NANCY</p>
                                </div>
                            </header>
                            <div class="detail client">
                                <div>
                                    <h4>Detalles del cliente</h4>
                                    <p><b>Número de teléfono móvil</b> : <a href="tel:+33612345678">+33612345678</a><br>
                                        <b>Horas de apertura :</b> Siempre abierto</p>
                                </div>
                                <div class="files"><b>Archivos</b><button class="plain" aria-label="Añadir archivo"><svg class="icon-circle"><use href="#i-add" /></svg></button></div>
                            </div>
                            <div class="detail">
                                <div>
                                    <h4>Detalles de la entrega</h4>
                                    <p><b>Duración</b> : 40min<br>
                                        <b>Franja horaria :</b> 08:00 ↔ 18:00<br>
                                        <b>Agente asignado :</b><br>
                                        <span class="dot"></span>Julia Fernandez</p>
                                </div>
                                <div class="files"><b>Archivos</b><button class="plain" aria-label="Añadir archivo"><svg class="icon-circle"><use href="#i-add" /></svg></button></div>
                            </div>
                        </article>
                    </section>
                </div>
            </main>
        </div>
    </div>

    <button class="help">
        <svg width="34" height="34" viewBox="0 0 34 34"><path d="M8 29a14 14 0 1 1 6 2l-12 1c3-2 3-3 3-6" /></svg>
        Aide
    </button>
</body>

</html>
```
FILE: styles.css
```css
* {
    box-sizing: border-box;
}

html,
body {
    height: 100%;
    margin: 0;
}

body {
    padding: 5px;
    background: #fff;
    color: #212121;
    font-family: Inter, "Open Sans", sans-serif;
    font-size: 21px;
}

button,
input,
select {
    font: inherit;
    color: inherit;
}

button {
    padding: 0;
    border: 0;
    background: none;
    cursor: pointer;
}

a {
    color: inherit;
    text-decoration: none;
}

h1,
h2,
h3,
h4,
p,
ul {
    margin: 0;
    padding: 0;
}

ul {
    list-style: none;
}

b {
    font-weight: 600;
}

svg {
    flex: none;
    fill: none;
    stroke: currentColor;
    stroke-width: 2;
}

.sprite {
    position: absolute;
    width: 0;
    height: 0;
}

.icon {
    width: 32px;
    height: 32px;
}

.icon.wide {
    width: 36px;
}

.icon-sm {
    width: 28px;
    height: 28px;
}

.icon-circle {
    display: block;
    width: 34px;
    height: 34px;
}

.chev {
    width: 16px;
    height: 24px;
    stroke-width: 1.5;
}

.chev-sm {
    width: 12px;
    height: 18px;
}

.app {
    display: flex;
    flex-direction: column;
    height: 100%;
    overflow: hidden;
    border: 1px solid #cfcfcf;
    border-radius: 20px;
}

/* top bar */

.topbar {
    position: relative;
    z-index: 3;
    display: flex;
    flex: none;
    align-items: center;
    height: 106px;
    padding: 0 26px 0 37px;
    background: #fff;
    box-shadow: 0 2px 6px rgba(0, 0, 0, .35);
}

.logo {
    display: flex;
    align-items: center;
    gap: 10px;
    margin-right: 66px;
    font-family: "Open Sans", sans-serif;
    font-size: 41px;
    font-weight: 300;
    line-height: 48px;
}

.logo svg {
    stroke: none;
}

.logo b {
    font-weight: 700;
}

.warehouse-label {
    margin-right: 15px;
    font-size: 22px;
}

.select-wrap {
    position: relative;
}

.select-wrap::after {
    content: "";
    position: absolute;
    right: 26px;
    top: 24px;
    border: 8px solid transparent;
    border-top-color: #666;
    pointer-events: none;
}

.select-wrap select {
    appearance: none;
    width: 220px;
    height: 56px;
    padding: 0 25px;
    border: 2px solid #dcdcdc;
    border-radius: 4px;
    background: #fff;
}

.main-nav,
.user-nav {
    display: flex;
    align-items: center;
    font-size: 22px;
}

.main-nav {
    gap: 9px;
    margin-left: 144px;
}

.main-nav a {
    display: flex;
    align-items: center;
    gap: 3px;
    height: 52px;
    padding: 0 15px;
    border-radius: 6px;
}

.main-nav a.active,
.side-nav a.active {
    background: #edf6ff;
    color: #2b90e9;
}

.user-nav {
    gap: 40px;
    margin-left: auto;
}

.user-nav a {
    display: flex;
    align-items: center;
    gap: 2px;
}

.plain {
    display: block;
    line-height: 0;
}

.bell {
    position: relative;
    margin-right: -10px;
}

.count {
    position: absolute;
    left: 18px;
    top: -22px;
    width: 36px;
    height: 36px;
    border-radius: 50%;
    background: #046bb4;
    color: #fff;
    font-size: 19px;
    font-weight: 600;
    line-height: 36px;
    text-align: center;
}

.avatar {
    width: 66px;
    height: 66px;
    border-radius: 50%;
    background: #1a92ef;
    box-shadow: 0 4px 12px rgba(0, 0, 0, .35);
    color: #fff;
    font-size: 20px;
    font-weight: 700;
}

/* side bar */

.body {
    display: flex;
    flex: 1;
    min-height: 0;
}

.sidebar {
    position: relative;
    flex: none;
    width: 382px;
    padding: 149px 17px 0 16px;
    border-right: 1px solid #dcdcdc;
}

.collapse {
    position: absolute;
    z-index: 2;
    right: -24px;
    top: 26px;
    display: flex;
    align-items: center;
    justify-content: center;
    width: 48px;
    height: 48px;
    border-radius: 50%;
    background: #fff;
    box-shadow: 0 3px 8px rgba(0, 0, 0, .35);
}

.side-nav {
    display: flex;
    flex-direction: column;
    gap: 17px;
}

.side-nav a {
    display: flex;
    align-items: center;
    gap: 8px;
    height: 53px;
    padding-left: 8px;
    border-radius: 6px;
}

.side-nav .icon {
    width: 40px;
    height: 30px;
}

/* toolbar */

.main {
    display: flex;
    flex: 1;
    flex-direction: column;
    min-width: 0;
}

.toolbar {
    display: flex;
    flex: none;
    align-items: center;
    height: 100px;
    padding: 0 57px 0 51px;
    border-bottom: 2px solid #e0e0e0;
}

.toolbar h1 {
    margin-right: 28px;
    color: #d9672b;
    font-size: 30px;
    font-weight: 400;
}

.date-group {
    display: flex;
    height: 56px;
    border: 2px solid #e2e2e2;
    border-radius: 3px;
}

.date-group button {
    width: 60px;
}

.date-group .cal {
    width: 78px;
    border-right: 2px solid #e2e2e2;
}

.date-group input {
    width: 278px;
    padding: 0 25px;
    border: 0;
    border-left: 2px solid #e2e2e2;
    border-right: 2px solid #e2e2e2;
    background: #f8f8f8;
    font-size: 20px;
}

.actions {
    display: flex;
    align-items: center;
    gap: 11px;
    margin-left: auto;
}

.actions button {
    display: flex;
    align-items: center;
    justify-content: center;
    height: 53px;
    background: #046bb4;
    color: #fff;
}

.optimize {
    gap: 18px;
    width: 284px;
    border-radius: 3px;
    font-weight: 600;
}

.round {
    width: 53px;
    border-radius: 50%;
}

.actions .green {
    background: #4caf50;
}

/* content */

.content {
    display: grid;
    flex: 1;
    grid-template-columns: 11fr 13fr;
    gap: 27px;
    min-height: 0;
    padding: 0 12px 0 27px;
}

.route {
    display: flex;
    flex-direction: column;
    min-width: 0;
    padding-bottom: 13px;
}

.route-title {
    display: flex;
    flex: none;
    align-items: center;
    justify-content: center;
    gap: 12px;
    height: 79px;
    padding-left: 78px;
}

.route-title h2 {
    font-size: 31px;
    font-weight: 400;
}

.dot {
    display: inline-block;
    width: 17px;
    height: 17px;
    margin-right: 8px;
    border: 2px solid #111;
    border-radius: 50%;
    background: #6b97f8;
}

.dot.big {
    width: 34px;
    height: 34px;
    margin: 0;
}

.stats {
    display: flex;
    flex: none;
    align-items: center;
    justify-content: space-between;
    height: 90px;
    margin-bottom: 26px;
    padding: 0 27px 0 30px;
    border: 2px solid #e2e2e2;
    border-radius: 6px;
    box-shadow: 0 0 30px rgba(0, 0, 0, .07);
    color: #666;
    font-size: 20px;
    line-height: 30px;
}

.stats li {
    display: flex;
    align-items: center;
    gap: 10px;
}

.icon-st {
    width: 32px;
    height: 32px;
}

.icon-st.wide {
    width: 38px;
    height: 28px;
}

/* map */

.map {
    position: relative;
    flex: 1;
    min-height: 0;
    overflow: hidden;
}

.map-svg {
    display: block;
    width: 100%;
    height: 100%;
    stroke: none;
    font-family: Roboto, sans-serif;
}

.case-minor,
.case-major,
.fill-minor,
.fill-major,
.park-path,
.rail {
    fill: none;
    stroke-linejoin: round;
    stroke-linecap: round;
}

#minor path,
#major path {
    vector-effect: non-scaling-stroke;
}

.case-minor {
    stroke: #d9dde4;
    stroke-width: 7px;
}

.fill-minor {
    stroke: #fff;
    stroke-width: 5px;
}

.case-major {
    stroke: #dadee5;
    stroke-width: 14px;
}

.fill-major {
    stroke: #fff;
    stroke-width: 12px;
}

.park-path {
    stroke: #edf4f1;
    stroke-width: 3px;
}

.rail {
    stroke: #cbcfd4;
    stroke-width: 2px;
}

.lbl {
    stroke: #fff;
    stroke-width: 4px;
    stroke-linejoin: round;
    paint-order: stroke;
}

.street {
    fill: #666a6e;
    font-size: 18px;
}

.avenue {
    fill: #46494d;
    font-size: 20px;
    font-weight: 500;
}

.poi {
    font-size: 23px;
}

.teal {
    fill: #14868f;
    font-weight: 500;
}

.slate {
    fill: #5f7884;
}

.green {
    fill: #22884a;
}

.medium {
    font-weight: 500;
}

.blue {
    fill: #2a66bf;
    font-size: 22px;
}

.red {
    fill: #cf3a35;
}

.district {
    fill: #54575b;
    font-size: 23px;
    font-weight: 500;
    letter-spacing: 2px;
}

.city {
    fill: #202124;
    font-size: 33px;
    font-weight: 500;
}

.tags text {
    fill: #4c4014;
    font-size: 15px;
    font-weight: 400;
    text-anchor: middle;
}

.route-line {
    fill: none;
    stroke: #6f98ee;
    stroke-width: 4px;
    stroke-linejoin: round;
}

.pin {
    fill: #6b97f8;
    stroke: #0a0a14;
    stroke-width: 2px;
}

.stops text {
    fill: #fff;
    stroke: #8d97ad;
    stroke-width: 1px;
    paint-order: stroke;
    font-family: "Liberation Sans", sans-serif;
    font-size: 23px;
    font-weight: 700;
    text-anchor: middle;
}

.google {
    fill: #fff;
    stroke: #999;
    stroke-width: 3px;
    paint-order: stroke;
    font-size: 30px;
    font-weight: 500;
}

.zoom-ctl {
    position: absolute;
    right: 16px;
    top: 476px;
    width: 67px;
    background: #fff;
    box-shadow: 0 1px 4px rgba(0, 0, 0, .2);
}

.zoom-ctl button {
    display: block;
    width: 49px;
    height: 67px;
    margin: 0 auto;
}

.zoom-ctl button + button {
    border-top: 2px solid #e6e6e6;
}

.zoom-ctl svg {
    width: 30px;
    height: 30px;
    stroke: #666;
    stroke-width: 6;
}

.map-legal {
    position: absolute;
    right: 0;
    bottom: 0;
    display: flex;
    align-items: center;
    gap: 18px;
    height: 22px;
    padding: 0 12px 0 6px;
    background: rgba(245, 245, 245, .8);
    color: #000;
    font-family: Roboto, sans-serif;
    font-size: 17px;
    font-weight: 500;
}

.scale {
    display: flex;
    align-items: center;
    gap: 6px;
}

.scale i {
    width: 108px;
    height: 9px;
    border: 3px solid #666;
    border-top: 0;
}

/* stops panel */

.panel {
    min-width: 0;
    min-height: 0;
}

.panel-top {
    display: flex;
    align-items: center;
    justify-content: flex-end;
    height: 79px;
    padding-right: 27px;
}

.close {
    width: 90px;
    height: 54px;
    border: 2px solid #ccc;
    border-radius: 3px;
}

.close svg {
    width: 14px;
    height: 14px;
    stroke-width: 1;
}

.filter {
    display: flex;
    align-items: center;
    gap: 16px;
    height: 43px;
    margin: 0 0 14px 4px;
    padding: 0 34px 0 36px;
    border-radius: 22px;
    background: #efefef;
    color: #666;
}

.filter svg {
    width: 16px;
    height: 20px;
    stroke-width: 1.5;
}

.box {
    margin-bottom: 24px;
    border: 2px solid #e0e1e3;
    border-radius: 3px;
    background: #fff;
    box-shadow: 0 0 30px rgba(0, 0, 0, .07);
}

.start {
    display: flex;
    align-items: center;
    gap: 65px;
    height: 80px;
    padding-left: 28px;
    background: #efefef;
    line-height: 30px;
}

.stop header {
    display: flex;
    align-items: center;
    height: 127px;
    padding: 0 9px 0 16px;
    background: #efefef;
}

.num {
    width: 34px;
    height: 34px;
    margin-right: 20px;
    border-radius: 50%;
    background: #979797;
    font-size: 16px;
    font-weight: 700;
    line-height: 34px;
    text-align: center;
}

.who h3 {
    font-size: 28px;
    font-weight: 600;
    line-height: 38px;
}

.who p {
    font-size: 22px;
    line-height: 32px;
}

.when {
    position: relative;
    display: flex;
    align-items: flex-end;
    align-self: flex-start;
    height: 52px;
    margin-top: 30px;
    margin-left: auto;
}

.time {
    width: 69px;
    height: 35px;
    border-radius: 3px 0 0 3px;
    background: #046bb4;
    color: #fff;
    font-size: 17px;
    font-weight: 700;
    line-height: 35px;
    text-align: center;
}

.more {
    display: flex;
    align-items: center;
    justify-content: center;
    gap: 6px;
    width: 60px;
    height: 52px;
    padding-right: 8px;
    border: 6px solid #147cf8;
}

.more i {
    width: 4px;
    height: 4px;
    border-radius: 50%;
    background: #212121;
}

.step {
    position: absolute;
    z-index: 6;
    right: -12px;
    top: -12px;
    width: 35px;
    height: 35px;
    border-radius: 50%;
    background: #147cf8;
    color: #fff;
    font-family: "Liberation Sans", sans-serif;
    font-size: 24px;
    font-weight: 700;
    line-height: 35px;
    text-align: center;
}

.menu {
    position: absolute;
    z-index: 5;
    right: 0;
    top: 51px;
    width: 442px;
    padding: 13px 0 14px;
    border-radius: 6px;
    background: #fff;
    box-shadow: 0 10px 28px rgba(0, 0, 0, .45);
}

.menu button {
    display: flex;
    align-items: center;
    gap: 19px;
    width: 100%;
    height: 80px;
    padding: 0 26px 0 28px;
    color: #333;
    text-align: left;
    white-space: nowrap;
}

.menu button.tight {
    gap: 11px;
}

.menu svg {
    width: 22px;
    height: 22px;
    stroke-width: 1.5;
}

.menu svg.small {
    width: 17px;
    height: 17px;
}

.menu .current {
    position: relative;
    background: #f3f3f3;
    outline: 6px solid #147cf8;
    outline-offset: -4px;
}

.has-sub::after {
    content: "";
    margin-left: auto;
    border: 8px solid transparent;
    border-left-color: #111;
    border-right: 0;
}

.detail {
    display: flex;
    margin: 0 28px 0 24px;
    padding: 20px 0 0 4px;
    line-height: 30px;
}

.detail > div:first-child {
    flex: 1;
}

.detail.client {
    min-height: 156px;
    padding-top: 13px;
    border-bottom: 2px solid #e0e0e0;
}

.detail:last-child {
    min-height: 268px;
}

.detail h4 {
    margin-bottom: 9px;
    font-size: 27px;
    font-weight: 600;
    line-height: 38px;
}

.detail a {
    color: #046bb4;
    text-decoration: underline;
}

.detail .dot {
    vertical-align: -1px;
}

.files {
    flex: none;
    width: 474px;
    padding-top: 47px;
}

.files .plain {
    margin: 4px 0 0 28px;
}

/* chat */

.help {
    position: fixed;
    z-index: 10;
    right: 38px;
    bottom: 28px;
    display: flex;
    align-items: center;
    justify-content: center;
    gap: 14px;
    width: 179px;
    height: 77px;
    border-radius: 39px;
    background: #165ff5;
    color: #fff;
    font-size: 25px;
    font-weight: 700;
}

.help svg {
    stroke-width: 4;
    stroke-linejoin: round;
}
```
